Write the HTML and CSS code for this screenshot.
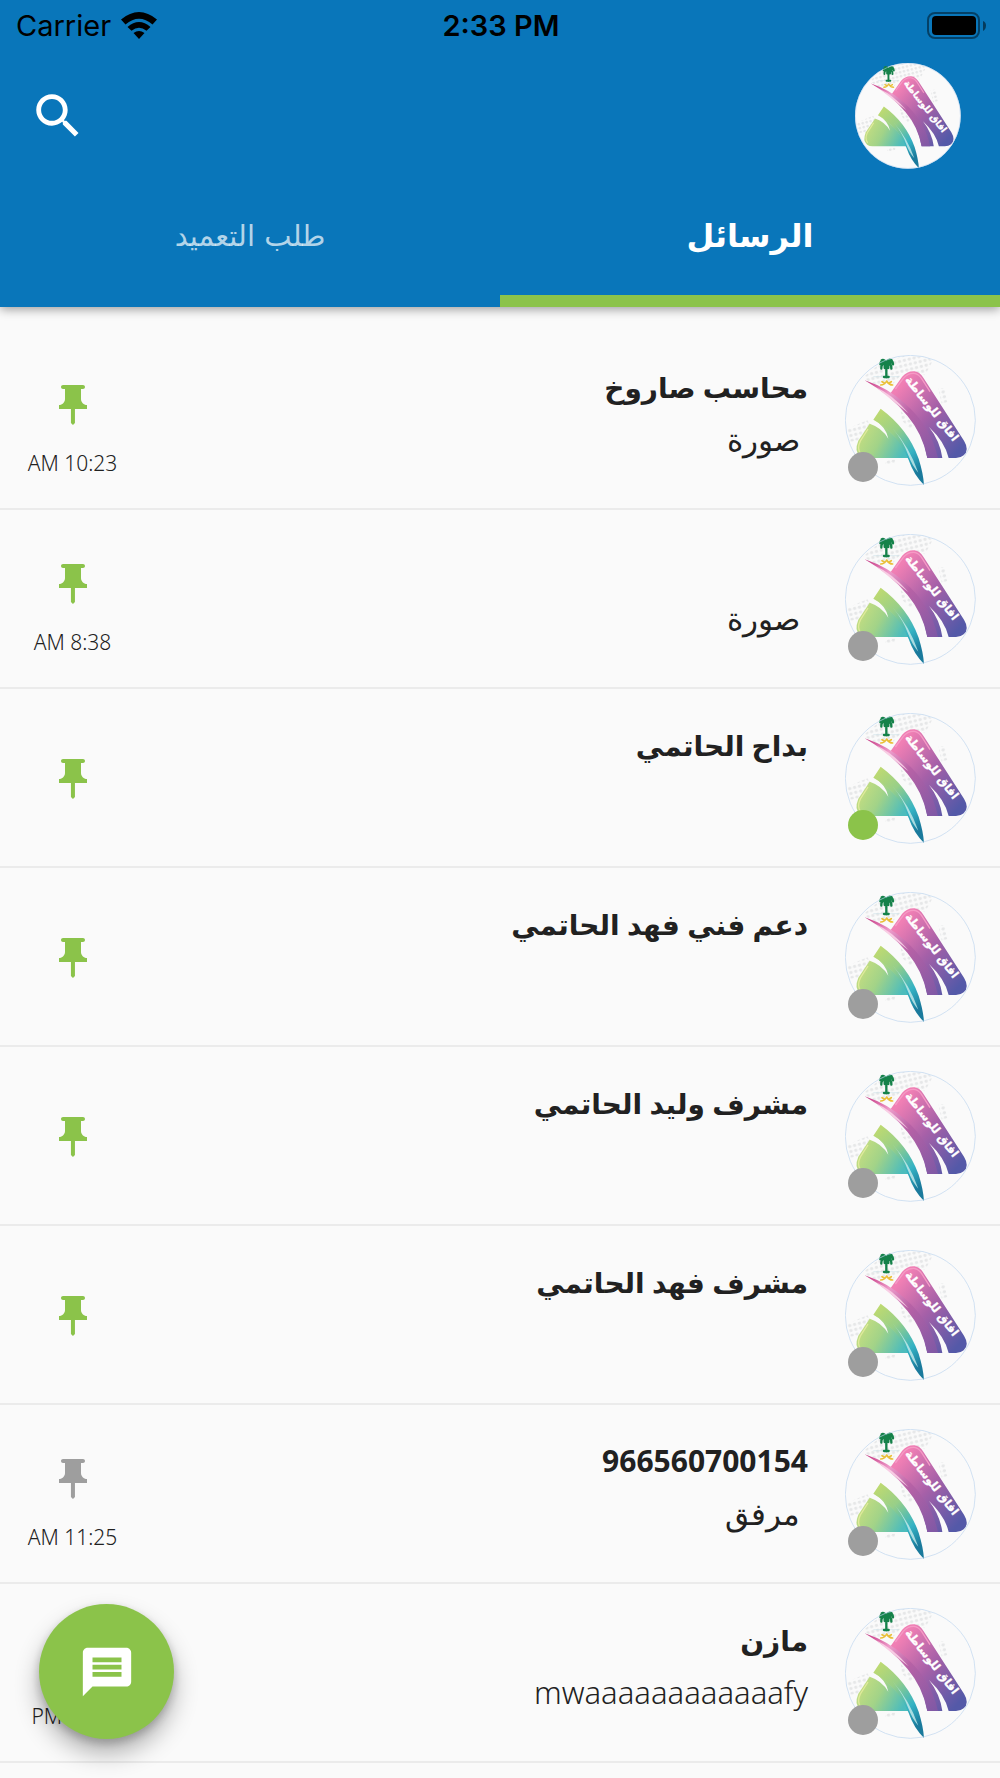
FILE: index.html
```html
<!DOCTYPE html>
<html lang="ar" dir="rtl">
<head>
<meta charset="utf-8">
<meta name="viewport" content="width=device-width, initial-scale=1">
<title>الرسائل</title>
<link rel="stylesheet" href="styles.css">
</head>
<body>
<svg class="sprite" aria-hidden="true">
  <defs>
    <linearGradient id="bar" x1="0" y1="0" x2="1" y2="1">
      <stop offset=".15" stop-color="#f07fb4"/><stop offset=".5" stop-color="#a660a8"/><stop offset=".9" stop-color="#5459a8"/>
    </linearGradient>
    <linearGradient id="sweep" x1="0" y1="0" x2="1" y2="1">
      <stop offset="0" stop-color="#c2317f"/><stop offset=".25" stop-color="#ee9cca"/><stop offset=".5" stop-color="#b862a6"/><stop offset="1" stop-color="#7d58a5"/>
    </linearGradient>
    <linearGradient id="hill" x1="0" y1=".2" x2="1" y2=".6">
      <stop offset="0" stop-color="#cde07f"/><stop offset=".5" stop-color="#a2d388"/><stop offset="1" stop-color="#4cbcbc"/>
    </linearGradient>
    <linearGradient id="blade" x1="0" y1="0" x2=".6" y2="1">
      <stop offset="0" stop-color="#c6dc6c"/><stop offset=".4" stop-color="#98cf88"/><stop offset=".75" stop-color="#35b3c4"/><stop offset="1" stop-color="#1a7a9c"/>
    </linearGradient>
    <pattern id="dots" width="15" height="15" patternUnits="userSpaceOnUse" patternTransform="rotate(-14)">
      <circle cx="7" cy="7" r="5" fill="#e6e7e8"/>
    </pattern>
  </defs>
  <symbol id="logo" viewBox="45 44 393 393">
    <circle cx="241" cy="240" r="196" fill="#fafafa"/>
    <path fill="url(#dots)" d="M98 112L145 74 220 47 290 50 308 62 285 105 255 95 215 102 190 130 140 135ZM52 265L112 240 120 252 84 300 58 305ZM325 145L345 142 352 185 335 190ZM165 358H195V370H165ZM212 212L255 255 240 265 215 240Z"/>
    <path stroke="#cfe3ea" stroke-width="2" d="M130 109H208"/>
    <path fill="none" stroke="#15824a" stroke-width="7" stroke-linecap="round" d="M169 68V111M169 68Q155 54 151 71M169 68Q188 54 189 72M169 67Q153 68 154 85M169 67Q185 68 184 85M169 66Q160 55 155 60M169 66Q176 55 185 60M164 69V83M175 69V83M162 110H176M158 68H182"/>
    <path fill="none" stroke="#eabf38" stroke-width="5" stroke-linecap="round" d="M170 122Q164 134 152 134M170 122Q177 134 188 134M163 128L156 124M177 128L184 124"/>
    <path fill="url(#bar)" d="M182 158L216 110Q232 91 254 93Q270 96 280 112L402 301Q419 329 401 345Q392 353 378 353H356Q345 305 297 260Q330 302 337 353H292Q270 230 182 158Z"/>
    <path fill="none" stroke="#f59ac5" stroke-width="4" d="M196 146L220 114Q233 98 252 99Q266 101 275 115L300 154"/>
    <path fill="url(#sweep)" d="M104 120Q174 143 223 188Q302 256 324 353H292Q278 280 232 226Q180 164 104 120Z"/>
    <path fill="#f9d3e7" opacity=".9" d="M138 141Q185 161 236 219Q187 181 138 141Z"/>
    <path fill="url(#hill)" d="M120 249L85 301Q72 332 90 347Q98 353 110 353H238Q200 276 133 238Z"/>
    <path fill="none" stroke="#e0ea9c" stroke-width="4" d="M114 266L91 302Q80 326 92 340"/>
    <path fill="#fafafa" d="M116 248L131 236Q169 261 175 295Q155 262 121 251Z"/>
    <path fill="url(#blade)" d="M152 205Q234 265 266 355Q280 400 282 434Q251 403 236 359Q202 278 130 238Z"/>
    <path fill="#c9ecec" opacity=".8" d="M187 263Q238 320 265 397Q246 376 235 345Q221 304 187 263Z"/>
    <text class="logo-text" text-anchor="middle" transform="translate(297 212) rotate(52)">افاق للوساطة</text>
    <circle cx="241" cy="240" r="195" fill="none" stroke="#bdd5ee" stroke-width="2"/>
  </symbol>
  <symbol id="pin" viewBox="0 0 24 24">
    <path fill="currentColor" d="M16 9V4h1c.55 0 1-.45 1-1s-.45-1-1-1H7c-.55 0-1 .45-1 1s.45 1 1 1h1v5c0 1.66-1.34 3-3 3v2h5.97v7l1 1 1-1v-7H19v-2c-1.66 0-3-1.34-3-3z"/>
  </symbol>
</svg>

<header class="header">
  <div class="status" dir="ltr">
    <div class="carrier">Carrier
      <svg class="wifi" viewBox="0 0 36 27"><path d="M0 7.500Q18-7.500 36 7.500L31.500 12.500Q18 1 4.500 12.500ZM6.500 15Q18 5 29.500 15L25.500 18.800Q18 12.500 10.500 18.800ZM12.500 21Q18 17 23.500 21L18 27Z"/></svg>
    </div>
    <div class="clock">2:33 PM</div>
    <svg class="battery" viewBox="0 0 59 27"><rect x="1" y="1" width="51" height="25" rx="7" fill="none" stroke="#000" stroke-opacity=".45" stroke-width="2"/><rect x="5" y="4" width="44" height="19" rx="4"/><path d="M56 9Q59 10 59 13.500T56 19Z" fill-opacity=".5"/></svg>
  </div>
  <div class="toolbar">
    <button class="profile" aria-label="الملف الشخصي"><svg><use href="#logo"/></svg></button>
    <button class="search" aria-label="بحث"><svg viewBox="0 0 24 24"><path fill="#fff" d="M15.500 14h-.79l-.28-.27C15.410 12.590 16 11.110 16 9.500 16 5.910 13.090 3 9.500 3S3 5.910 3 9.500 5.910 16 9.500 16c1.610 0 3.090-.59 4.230-1.570l.27.28v.79l5 4.990L20.490 19l-4.990-5zm-6 0C7.010 14 5 11.990 5 9.500S7.010 5 9.500 5 14 7.010 14 9.500 11.990 14 9.500 14z"/></svg></button>
  </div>
  <nav class="tabs" role="tablist">
    <button class="tab active" role="tab" aria-selected="true">الرسائل</button>
    <button class="tab" role="tab" aria-selected="false">طلب التعميد</button>
  </nav>
</header>

<main>
  <ul class="chats">
    <li><a class="chat" href="#">
      <span class="avatar"><svg><use href="#logo"/></svg><i class="dot"></i></span>
      <span class="body"><strong class="name">محاسب صاروخ</strong><span class="preview media">صورة</span></span>
      <span class="meta timed"><svg class="pin"><use href="#pin"/></svg><time class="time">AM 10:23</time></span>
    </a></li>
    <li><a class="chat" href="#">
      <span class="avatar"><svg><use href="#logo"/></svg><i class="dot"></i></span>
      <span class="body"><strong class="name"></strong><span class="preview media">صورة</span></span>
      <span class="meta timed"><svg class="pin"><use href="#pin"/></svg><time class="time">AM 8:38</time></span>
    </a></li>
    <li><a class="chat" href="#">
      <span class="avatar"><svg><use href="#logo"/></svg><i class="dot online"></i></span>
      <span class="body"><strong class="name">بداح الحاتمي</strong></span>
      <span class="meta"><svg class="pin"><use href="#pin"/></svg></span>
    </a></li>
    <li><a class="chat" href="#">
      <span class="avatar"><svg><use href="#logo"/></svg><i class="dot"></i></span>
      <span class="body"><strong class="name">دعم فني فهد الحاتمي</strong></span>
      <span class="meta"><svg class="pin"><use href="#pin"/></svg></span>
    </a></li>
    <li><a class="chat" href="#">
      <span class="avatar"><svg><use href="#logo"/></svg><i class="dot"></i></span>
      <span class="body"><strong class="name">مشرف وليد الحاتمي</strong></span>
      <span class="meta"><svg class="pin"><use href="#pin"/></svg></span>
    </a></li>
    <li><a class="chat" href="#">
      <span class="avatar"><svg><use href="#logo"/></svg><i class="dot"></i></span>
      <span class="body"><strong class="name">مشرف فهد الحاتمي</strong></span>
      <span class="meta"><svg class="pin"><use href="#pin"/></svg></span>
    </a></li>
    <li><a class="chat" href="#">
      <span class="avatar"><svg><use href="#logo"/></svg><i class="dot"></i></span>
      <span class="body"><strong class="name number">966560700154</strong><span class="preview media">مرفق</span></span>
      <span class="meta timed"><svg class="pin unpinned"><use href="#pin"/></svg><time class="time">AM 11:25</time></span>
    </a></li>
    <li><a class="chat" href="#">
      <span class="avatar"><svg><use href="#logo"/></svg><i class="dot"></i></span>
      <span class="body"><strong class="name">مازن</strong><span class="preview">mwaaaaaaaaaaaafy</span></span>
      <span class="meta timed"><svg class="pin unpinned"><use href="#pin"/></svg><time class="time short">PM</time></span>
    </a></li>
  </ul>
</main>

<button class="compose" aria-label="رسالة جديدة"><svg viewBox="0 0 24 24"><path fill="#fff" d="M20 2H4c-1.100 0-1.990.9-1.990 2L2 22l4-4h14c1.100 0 2-.9 2-2V4c0-1.100-.9-2-2-2zm-2 12H6v-2h12v2zm0-3H6V9h12v2zm0-3H6V6h12v2z"/></svg></button>
</body>
</html>
```
FILE: styles.css
```css
* { box-sizing: border-box; }
body {
  margin: 0;
  background: #fafafa;
  color: #212121;
  font-family: "Noto Sans", "DejaVu Sans", sans-serif;
}
button {
  border: 0;
  padding: 0;
  background: none;
  font: inherit;
  color: inherit;
  cursor: pointer;
}
svg { display: block; }
.sprite { position: absolute; width: 0; height: 0; }
.logo-text { font: bold 34px "DejaVu Sans", sans-serif; fill: #fff; stroke: #fff; stroke-width: 1px; }

.header {
  background: #0976ba;
  box-shadow: 0 2px 10px rgba(0, 0, 0, .4);
}
.status {
  display: grid;
  grid-template-columns: 1fr auto 1fr;
  align-items: center;
  height: 50px;
  padding: 0 14px 0 16px;
  color: #000;
  font-family: Inter, sans-serif;
  font-size: 29px;
}
.carrier { display: flex; align-items: center; gap: 10px; }
.wifi { width: 36px; height: 27px; }
.clock { font-weight: 600; }
.battery { width: 59px; height: 27px; justify-self: end; }
.toolbar {
  display: flex;
  align-items: center;
  justify-content: space-between;
  padding: 13px 39px 0 29px;
}
.profile svg { width: 106px; height: 106px; }
.search svg { width: 58px; height: 58px; }
.tabs { display: grid; grid-template-columns: 1fr 1fr; }
.tab {
  height: 138px;
  padding-top: 8px;
  border-bottom: 12px solid transparent;
  color: rgba(255, 255, 255, .7);
  font-family: "DejaVu Sans", sans-serif;
  font-size: 29px;
}
.tab.active {
  border-color: #8bc34a;
  color: #fff;
  font-size: 32px;
  font-weight: bold;
}

.chats { list-style: none; margin: 0; padding: 24px 0 0; }
.chat {
  display: flex;
  min-height: 179px;
  padding: 24px 24px 22px;
  border-bottom: 2px solid #ebebeb;
  color: inherit;
  text-decoration: none;
}
.avatar { position: relative; width: 131px; height: 131px; flex: none; }
.avatar svg { width: 131px; height: 131px; }
.dot {
  position: absolute;
  left: 3px;
  bottom: 4px;
  width: 30px;
  height: 30px;
  border-radius: 50%;
  background: #9e9e9e;
}
.dot.online { background: #8bc34a; }
.body {
  display: flex;
  flex: 1;
  flex-direction: column;
  padding: 6px 37px 0 0;
}
.name { min-height: 52px; font-size: 28px; line-height: 52px; }
.name.number { font-size: 30px; }
.preview { font-size: 31px; font-weight: 300; line-height: 52px; }
.preview.media { padding-right: 8px; }
.meta {
  display: flex;
  flex-direction: column;
  align-items: center;
  justify-content: center;
  width: 97px;
}
.meta.timed { justify-content: flex-start; gap: 19px; padding-top: 26px; }
.pin { width: 48px; height: 48px; color: #8bc34a; }
.pin.unpinned { color: #9e9e9e; }
.time { font-size: 21px; font-weight: 300; line-height: 30px; }
.time.short { width: 82px; text-align: left; }

.compose {
  position: fixed;
  left: 39px;
  bottom: 39px;
  display: grid;
  place-items: center;
  width: 135px;
  height: 135px;
  border-radius: 50%;
  background: #8bc34a;
  box-shadow: 0 14px 24px rgba(0, 0, 0, .3), 0 4px 10px rgba(0, 0, 0, .2);
}
.compose svg { width: 58px; height: 58px; }
```
